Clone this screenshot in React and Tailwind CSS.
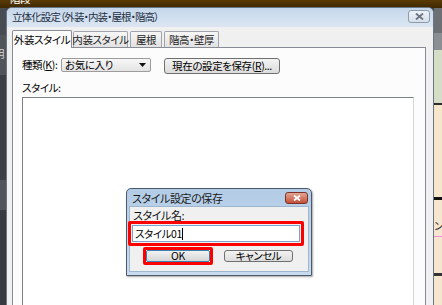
import React from 'react';

const Tab = ({ label, active, className = '' }) => (
    <div
        className={
            active
                ? `h-[18px] flex items-center justify-center whitespace-nowrap bg-[#fcfcfc] border border-b-0 border-[#898c95] rounded-t-[2px] text-black ${className}`
                : `h-[16px] mb-[1px] flex items-center justify-center whitespace-nowrap bg-gradient-to-b from-[#f6f6f6] to-[#e2e2e2] border border-b-0 border-[#a0a3aa] rounded-t-[2px] text-[#222] ${className}`
        }
    >
        {label}
    </div>
);

const App = () => {
    return (
        <div className="relative w-[442px] h-[305px] overflow-hidden bg-[#3d4349] font-['Noto_Sans_CJK_JP',sans-serif] text-[10.5px] leading-[12px] tracking-[-0.4px] whitespace-nowrap [font-feature-settings:'palt']">
            {/* Backdrop (other application behind the dialog) */}
            <div className="flex flex-col h-full">
                <div className="h-[8px] shrink-0 bg-gradient-to-b from-[#5a3b06] to-[#3f2800] overflow-hidden pl-[10px]">
                    <span className="block -mt-[7px] leading-[12px] text-white">階段</span>
                </div>
                <div className="flex flex-1">
                    <div className="w-[6px] flex flex-col">
                        <div className="h-[27px] bg-[#464c52]" />
                        <div className="h-[40px] bg-[#4f555b] overflow-hidden">
                            <span className="block mt-[13px] -ml-[6px] text-[#d8d8d8]">明</span>
                        </div>
                        <div className="h-[105px] bg-[#3a4046]" />
                        <div className="h-[30px] bg-[#50565c]" />
                        <div className="flex-1 bg-[#363c42]" />
                    </div>
                    <div className="flex-1" />
                    <div className="w-[8px] flex flex-col">
                        <div className="h-[25px] bg-[#6c7074]" />
                        <div className="h-[17px] bg-[#8b8f93]" />
                        <div className="h-[53px] bg-[#d5ddc7]" />
                        <div className="h-[2px] bg-[#2c2c2c]" />
                        <div className="h-[92px] bg-[#f6e6cc]" />
                        <div className="h-[3px] bg-[#111]" />
                        <div className="h-[36px] bg-[#f7e6cf] overflow-hidden">
                            <span className="block mt-[20px] text-[#333]">ン</span>
                        </div>
                        <div className="h-[1px] bg-[#f08de0]" />
                        <div className="h-[36px] bg-[#f7e6cf]" />
                        <div className="h-[3px] bg-[#333]" />
                        <div className="flex-1 bg-[#f7e6cf]" />
                    </div>
                </div>
            </div>

            {/* Main window */}
            <div className="absolute left-[6px] top-[7px] w-[428px] h-[310px] flex flex-col border border-[#6a7684] rounded-t-[6px] bg-[#f0f0f0] overflow-hidden">
                <div className="h-[19px] shrink-0 flex items-start justify-between pl-[5px] pr-[3px] bg-gradient-to-b from-[#c6d7eb] to-[#dbe6f2]">
                    <span className="mt-[3px] text-[10.5px] tracking-[-0.9px] text-[#1f3045]">立体化設定（外装・内装・屋根・階高）</span>
                    <div className="mt-[2px] w-[22px] h-[13px] flex items-center justify-center border border-[#8e9bab] rounded-[3px] bg-gradient-to-b from-[#edf2f8] to-[#d6e0eb]">
                        <svg width="9" height="7" viewBox="0 0 9 7">
                            <path d="M1 0.5 L8 6.5 M8 0.5 L1 6.5" stroke="#6b7480" strokeWidth="1.8" />
                        </svg>
                    </div>
                </div>

                <div className="flex-1 flex flex-col pt-[3px] pl-[5px] pr-[7px]">
                    {/* Tabs */}
                    <div className="relative z-10 flex items-end -mb-[1px]">
                        <Tab label="外装スタイル" active className="w-[60px]" />
                        <Tab label="内装スタイル" className="w-[55px] ml-[1px]" />
                        <Tab label="屋根" className="w-[32px] ml-[2px]" />
                        <Tab label="階高・壁厚" className="w-[55px] ml-[2px]" />
                    </div>

                    {/* Tab panel */}
                    <div className="flex-1 flex flex-col bg-[#fcfcfc] border border-[#898c95] pt-[10px] pl-[9px] pr-[11px]">
                        <div className="flex items-start h-[16px]">
                            <span className="w-[39px] mt-[1px]">
                                種類(<span className="underline">K</span>):
                            </span>
                            <div className="w-[90px] h-[14px] flex items-center justify-between pl-[3px] pr-[4px] border border-[#9c9c9c] rounded-[2px] bg-gradient-to-b from-[#f7f7f7] to-[#e4e4e4]">
                                <span>お気に入り</span>
                                <svg width="7" height="4" viewBox="0 0 7 4">
                                    <path d="M0 0 H7 L3.5 4 Z" fill="#111" />
                                </svg>
                            </div>
                            <div className="ml-[13px] w-[116px] h-[16px] flex items-center justify-center border border-[#707070] rounded-[3px] bg-gradient-to-b from-[#f3f3f3] to-[#dcdcdc]">
                                現在の設定を保存(<span className="underline">R</span>)...
                            </div>
                        </div>

                        <span className="mt-[8px]">スタイル:</span>
                        <div className="mt-[3px] flex-1 bg-white border-t border-l border-[#7c8088] border-r border-r-[#d6d6d6]" />
                    </div>
                </div>
            </div>

            {/* Save style dialog */}
            <div className="absolute left-[126px] top-[188px] w-[186px] flex flex-col border border-[#4d5a6a] rounded-t-[5px] bg-gradient-to-b from-[#b3cce6] to-[#c9dcef] shadow-[1px_1px_2px_rgba(0,0,0,0.35)]">
                <div className="h-[17px] flex items-start justify-between pl-[5px] pr-[3px]">
                    <span className="mt-[3px] text-[11px] text-[#1a1a1a]">スタイル設定の保存</span>
                    <div className="mt-[3px] w-[23px] h-[12px] flex items-center justify-center border border-[#7a3326] rounded-[3px] bg-gradient-to-b from-[#e3a594] to-[#c34e36]">
                        <svg width="8" height="6" viewBox="0 0 8 6">
                            <path d="M1 0.5 L7 5.5 M7 0.5 L1 5.5" stroke="#fff" strokeWidth="1.8" />
                        </svg>
                    </div>
                </div>
                <div className="mx-[2px] mb-[3px] flex flex-col bg-[#f0f0f0] border border-[#9fb6cf] pt-[2px] pb-[6px]">
                    <span className="ml-[3px] text-[11px] text-[#111]">スタイル名:</span>
                    <div className="-ml-[2px] mr-[4px] border-[3px] border-[#ff0000] rounded-[2px] p-[1px]">
                        <div className="h-[17px] flex items-center pl-[2px] bg-white border border-[#7da2ce]">
                            <span className="text-black">スタイル01</span>
                            <span className="w-[1px] h-[12px] bg-black" />
                        </div>
                    </div>
                    <div className="mt-[1px] flex items-start pl-[13px]">
                        <div className="w-[70px] h-[18px] border-[3px] border-[#ff0000] rounded-[2px]">
                            <div className="h-full flex items-center justify-center border border-[#3c7fb1] rounded-[2px] bg-gradient-to-b from-[#f2f2f2] to-[#d6d6d6] text-black">
                                OK
                            </div>
                        </div>
                        <div className="ml-[11px] mt-[3px] w-[69px] h-[12px] flex items-center justify-center border border-[#707070] rounded-[3px] bg-gradient-to-b from-[#f3f3f3] to-[#dcdcdc] text-black">
                            キャンセル
                        </div>
                    </div>
                </div>
            </div>
        </div>
    );
};

export default App;
